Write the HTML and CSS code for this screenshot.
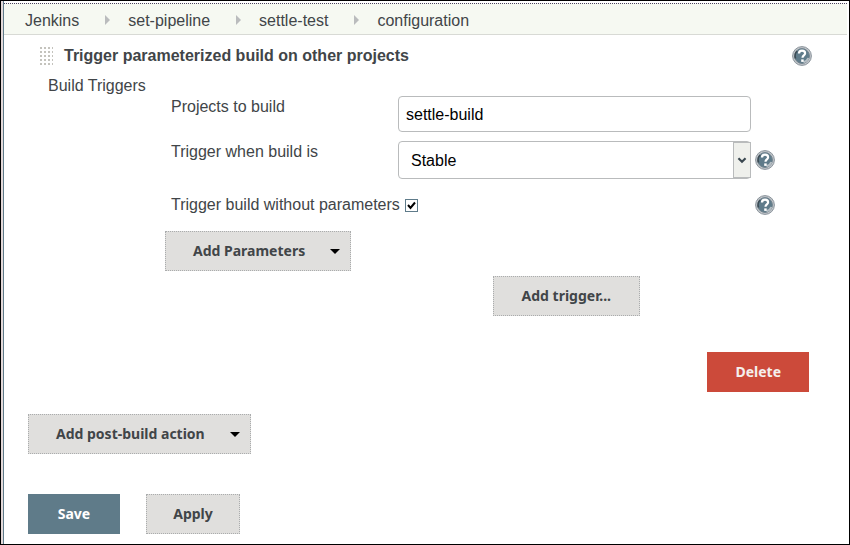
FILE: index.html
```html
<!DOCTYPE html>
<html lang="en">
<head>
<meta charset="utf-8">
<title>settle-test configuration</title>
<link rel="stylesheet" href="styles.css">
</head>
<body>
<svg class="defs" aria-hidden="true">
  <symbol id="help" viewBox="0 0 20 20">
    <circle cx="10" cy="10" r="9.4" fill="#c3c6ca" stroke="#8a949c" stroke-width="1"/>
    <circle cx="10" cy="10" r="7.4" fill="#5f7b8a" stroke="#71838e" stroke-width="1"/>
    <path d="M3.6 12.5A7 7 0 0 1 5.2 5" fill="none" stroke="#3c4b54" stroke-width="1.5"/>
    <path d="M11.5 16.3A7 7 0 0 0 16.3 12" fill="none" stroke="#b5bec4" stroke-width="2"/>
    <path d="M7 7.4C7 5.4 8.3 4.6 10 4.6s3.1.9 3.1 2.6c0 2.2-2.6 2.2-2.6 4.6" fill="none" stroke="#fff" stroke-width="2.2"/>
    <path d="M9.2 13.4h2.5v2.5H9.2z" fill="#fff"/>
  </symbol>
</svg>
<div class="window">
  <nav class="crumbs" aria-label="Breadcrumb">
    <a href="#">Jenkins</a>
    <a href="#">set-pipeline</a>
    <a href="#">settle-test</a>
    <a href="#">configuration</a>
  </nav>
  <main>
    <section class="action">
      <header class="action-head">
        <span class="grip"></span>
        <h1>Trigger parameterized build on other projects</h1>
        <a class="help" href="#" aria-label="Help"><svg><use href="#help"/></svg></a>
      </header>
      <h2>Build Triggers</h2>
      <div class="fields">
        <div class="row">
          <label for="projects">Projects to build</label>
          <input class="text" id="projects" type="text" value="settle-build">
        </div>
        <div class="row">
          <label for="when">Trigger when build is</label>
          <div class="pick">
            <select id="when"><option>Stable</option></select>
            <svg class="chevron" viewBox="0 0 18 36" aria-hidden="true"><path d="M5 16l4 4 4-4" fill="none" stroke="#3a474f" stroke-width="2.4"/></svg>
          </div>
          <a class="help" href="#" aria-label="Help"><svg><use href="#help"/></svg></a>
        </div>
        <div class="row check">
          <label for="noparams">Trigger build without parameters</label>
          <input id="noparams" type="checkbox" checked>
          <a class="help" href="#" aria-label="Help"><svg><use href="#help"/></svg></a>
        </div>
      </div>
      <div class="params"><button type="button" class="btn menu">Add Parameters</button></div>
      <div class="trigger"><button type="button" class="btn">Add trigger...</button></div>
      <div class="remove"><button type="button" class="btn danger">Delete</button></div>
    </section>
    <button type="button" class="btn menu">Add post-build action</button>
    <footer>
      <button type="submit" class="btn primary">Save</button>
      <button type="button" class="btn">Apply</button>
    </footer>
  </main>
</div>
</body>
</html>
```
FILE: styles.css
```css
* { box-sizing: border-box; }
body {
  margin: 0;
  font: 16px/20px "Liberation Sans", Arial, sans-serif;
  color: #414548;
  background: #fff;
}
.defs { position: absolute; width: 0; height: 0; }
.window {
  min-height: 100vh;
  padding: 2px 0 0 2px;
  border: 1px solid #000;
  background: linear-gradient(90deg, #e3d9d9 2px, #5f7b8a 2px, #5f7b8a 3px, #fff 3px);
}
.crumbs {
  display: flex;
  gap: 49px;
  height: 32px;
  margin: 0 2px 0 1px;
  padding: 7px 21px 0;
  background: #f6f9f2;
  border-top: 1px dotted #4c4260;
  border-bottom: 1px solid #d8dad5;
}
.crumbs a { position: relative; color: inherit; text-decoration: none; }
.crumbs a + a::before {
  content: "";
  position: absolute;
  left: -23px;
  top: 4px;
  border: solid transparent;
  border-width: 5px 0 5px 5px;
  border-left-color: #babcbd;
}
main { padding: 11px 37px 10px 25px; }
.action { padding-left: 12px; margin-bottom: 22px; }
.action-head { display: flex; align-items: center; }
.grip {
  width: 13px;
  height: 18px;
  margin-right: 11px;
  background:
    repeating-linear-gradient(90deg, transparent 0 2px, #fff 2px 4px),
    repeating-linear-gradient(#c4c3bd 0 2px, #fff 2px 4px);
}
h1 { margin: 0; font-size: 16px; line-height: 20px; }
.help { margin-left: auto; width: 20px; height: 20px; }
.help svg { display: block; width: 20px; height: 20px; }
h2 { margin: 10px 0 0 8px; font-size: 16px; line-height: 20px; font-weight: 400; }
.fields { padding: 0 37px 0 131px; }
.row { display: flex; margin-bottom: 9px; }
.row > label { flex: 0 0 227px; line-height: 22px; white-space: nowrap; }
.text, .pick select {
  height: 36px;
  border: 1px solid #b9bbbc;
  border-radius: 4px;
  background: #fff;
  color: #000;
  font: inherit;
}
.text { flex: 1; min-width: 0; margin-right: 24px; padding: 1px 7px 0; }
.pick { position: relative; flex: 1; }
.pick select { display: block; width: 100%; height: 38px; padding: 1px 30px 0 12px; appearance: none; }
.pick .chevron {
  position: absolute;
  right: 0;
  top: 1px;
  width: 18px;
  height: 36px;
  border: 1px solid #b9bbbc;
  background: #eff0ec;
  pointer-events: none;
}
.pick + .help { align-self: center; margin-left: 4px; }
.check { align-items: center; margin: 15px 0 15px; }
.check input {
  appearance: none;
  width: 13px;
  height: 13px;
  margin: 0 0 0 5px;
  border: 1px solid #5f7b8a;
  background: #fff;
}
.check input:checked {
  background: url("data:image/svg+xml,%3Csvg xmlns='http://www.w3.org/2000/svg' viewBox='0 0 11 11'%3E%3Cpath d='M2 5l2.5 3L9 2.5' fill='none' stroke='%23000' stroke-width='2'/%3E%3C/svg%3E") #fff;
}
.btn {
  display: block;
  height: 40px;
  padding: 0 28px;
  border: 1px dotted #aaacad;
  background: #e0dfdd;
  color: #414548;
  font: 700 14px/20px "Noto Sans", sans-serif;
}
.menu { display: flex; align-items: center; gap: 25px; padding: 0 10px 0 27px; }
.menu::after {
  content: "";
  border: solid transparent;
  border-width: 5px 5px 0;
  border-top-color: #000;
}
.danger { padding: 0 27px; background: #cc4a3a; border-color: #cc4a3a; color: #f5efed; }
.primary { background: #5f7b89; border-color: #5f7b89; color: #fff; }
.params { padding-left: 125px; margin-bottom: 5px; }
.trigger { display: flex; justify-content: flex-end; padding-right: 172px; margin-bottom: 36px; }
.remove { display: flex; justify-content: flex-end; padding-right: 3px; }
footer { display: grid; grid-template-columns: 92px 94px; gap: 26px; margin-top: 40px; }
footer .btn { padding: 0; }
```
